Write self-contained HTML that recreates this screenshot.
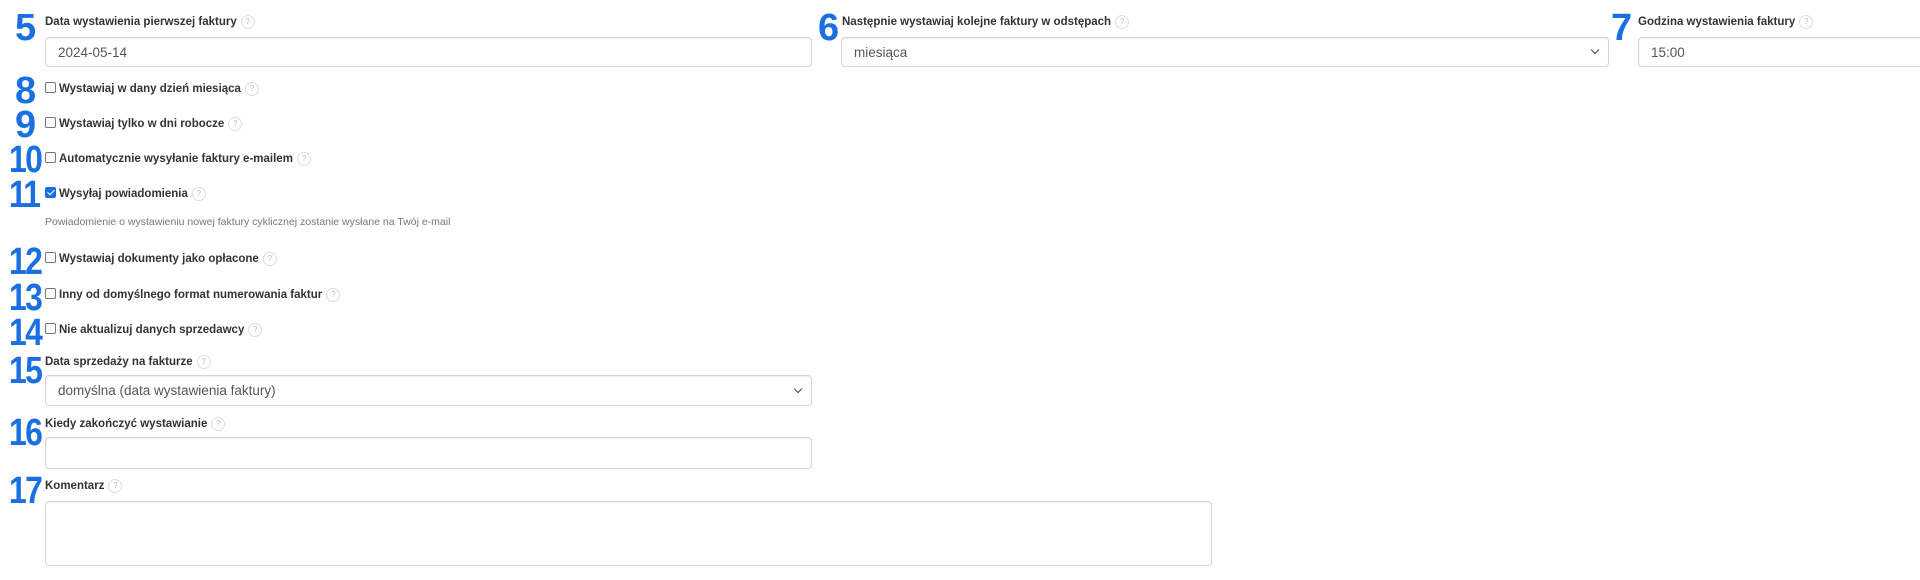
<!DOCTYPE html>
<html><head><meta charset="utf-8"><style>
body{margin:0;width:1920px;height:580px;background:#fff;position:relative;overflow:hidden;font-family:"Liberation Sans",Arial,sans-serif;}
.n{position:absolute;font-weight:bold;font-size:38px;color:#1a6fe3;line-height:1;letter-spacing:-1px}
.n2{transform:scaleX(0.84);transform-origin:left top;letter-spacing:-2px}
.l{position:absolute;font-size:11.5px;font-weight:bold;color:#333;white-space:nowrap;line-height:14px}
.q{display:inline-block;width:12px;height:12px;border:1px solid #ddd;border-radius:50%;font-size:8px;color:#bbb;text-align:center;line-height:12px;font-weight:normal;vertical-align:middle;margin-left:4px}
.in{position:absolute;box-sizing:border-box;border:1px solid #d4d4d4;border-radius:4px;background:#fff;box-shadow:inset 0 1px 1px rgba(0,0,0,.06);font-size:13.5px;color:#555;padding-left:12px;display:flex;align-items:center}
.cb{display:inline-block;width:11px;height:11px;border:1px solid #777;border-radius:2px;vertical-align:middle;margin-right:3px;position:relative;top:-2px;box-sizing:border-box}
.cb.on{background:#1a6fe3;border-color:#1a6fe3}
.cb.on:after{content:"";position:absolute;left:3px;top:0px;width:3px;height:6px;border-right:1.5px solid #fff;border-bottom:1.5px solid #fff;transform:rotate(45deg)}
.ch{position:absolute;right:10px;top:50%;width:5px;height:5px;border-right:1.3px solid #444;border-bottom:1.3px solid #444;transform:rotate(45deg);margin-top:-5px}
</style></head><body>
<div class="n" style="left:15px;top:9px">5</div>
<div class="l" style="left:45px;top:15px">Data wystawienia pierwszej faktury<span class="q">?</span></div>
<div class="in" style="left:45px;top:37px;width:767px;height:30px">2024-05-14</div>

<div class="n" style="left:818px;top:9px">6</div>
<div class="l" style="left:842px;top:15px">Następnie wystawiaj kolejne faktury w odstępach<span class="q">?</span></div>
<div class="in" style="left:841px;top:37px;width:768px;height:30px">miesiąca<span class="ch"></span></div>

<div class="n" style="left:1611px;top:9px">7</div>
<div class="l" style="left:1638px;top:15px">Godzina wystawienia faktury<span class="q">?</span></div>
<div class="in" style="left:1638px;top:37px;width:300px;height:30px">15:00</div>

<div class="n" style="left:15px;top:72px">8</div>
<div class="l" style="left:45px;top:82px"><span class="cb"></span>Wystawiaj w dany dzień miesiąca<span class="q">?</span></div>
<div class="n" style="left:15px;top:106px">9</div>
<div class="l" style="left:45px;top:117px"><span class="cb"></span>Wystawiaj tylko w dni robocze<span class="q">?</span></div>
<div class="n n2" style="left:9px;top:141px">10</div>
<div class="l" style="left:45px;top:152px"><span class="cb"></span>Automatycznie wysyłanie faktury e-mailem<span class="q">?</span></div>
<div class="n n2" style="left:9px;top:176px">11</div>
<div class="l" style="left:45px;top:187px"><span class="cb on"></span>Wysyłaj powiadomienia<span class="q">?</span></div>
<div style="position:absolute;left:45px;top:216px;font-size:10.5px;color:#777">Powiadomienie o wystawieniu nowej faktury cyklicznej zostanie wysłane na Twój e-mail</div>
<div class="n n2" style="left:9px;top:243px">12</div>
<div class="l" style="left:45px;top:252px"><span class="cb"></span>Wystawiaj dokumenty jako opłacone<span class="q">?</span></div>
<div class="n n2" style="left:9px;top:279px">13</div>
<div class="l" style="left:45px;top:288px"><span class="cb"></span>Inny od domyślnego format numerowania faktur<span class="q">?</span></div>
<div class="n n2" style="left:9px;top:314px">14</div>
<div class="l" style="left:45px;top:323px"><span class="cb"></span>Nie aktualizuj danych sprzedawcy<span class="q">?</span></div>
<div class="n n2" style="left:9px;top:352px">15</div>
<div class="l" style="left:45px;top:355px">Data sprzedaży na fakturze<span class="q">?</span></div>
<div class="in" style="left:45px;top:375px;width:767px;height:31px">domyślna (data wystawienia faktury)<span class="ch"></span></div>
<div class="n n2" style="left:9px;top:414px">16</div>
<div class="l" style="left:45px;top:417px">Kiedy zakończyć wystawianie<span class="q">?</span></div>
<div class="in" style="left:45px;top:437px;width:767px;height:32px"></div>
<div class="n n2" style="left:9px;top:472px">17</div>
<div class="l" style="left:45px;top:479px">Komentarz<span class="q">?</span></div>
<div class="in" style="left:45px;top:501px;width:1167px;height:65px"></div>
</body></html>
